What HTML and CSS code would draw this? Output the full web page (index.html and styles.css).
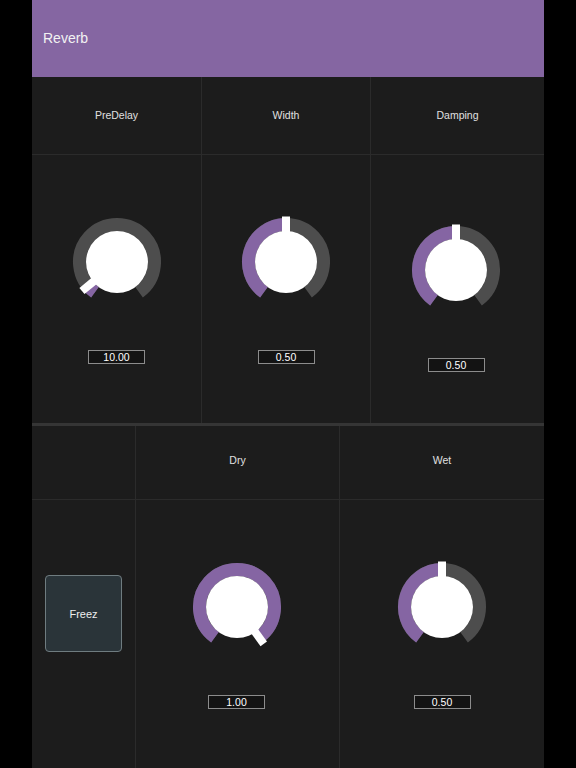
FILE: index.html
```html
<!DOCTYPE html>
<html lang="en">
<head>
    <meta charset="UTF-8">
    <meta name="viewport" content="width=device-width, initial-scale=1.0">
    <title>Reverb</title>
    <link rel="stylesheet" href="styles.css">
</head>
<body>
    <div class="app">
        <header class="title-bar">Reverb</header>

        <!-- Top row: PreDelay / Width / Damping -->
        <section class="panel panel-top">
            <div class="column">
                <div class="column-label">PreDelay</div>
                <div class="column-body">
                    <svg class="knob" width="88" height="88" viewBox="0 0 88 88">
                        <path class="knob-track" d="M 21.96 74.34 A 37.5 37.5 0 1 1 66.04 74.34"/>
                        <path class="knob-fill" d="M 21.96 74.34 A 37.5 37.5 0 0 1 15.10 67.90"/>
                        <rect class="knob-pointer" x="40" y="-1.5" width="8" height="16" transform="rotate(-129.6 44 44)"/>
                        <circle class="knob-cap" cx="44" cy="44" r="31"/>
                    </svg>
                    <div class="value-box">10.00</div>
                </div>
            </div>
            <div class="column">
                <div class="column-label">Width</div>
                <div class="column-body">
                    <svg class="knob" width="88" height="88" viewBox="0 0 88 88">
                        <path class="knob-track" d="M 21.96 74.34 A 37.5 37.5 0 1 1 66.04 74.34"/>
                        <path class="knob-fill" d="M 21.96 74.34 A 37.5 37.5 0 0 1 44 6.5"/>
                        <rect class="knob-pointer" x="40" y="-1.5" width="8" height="16"/>
                        <circle class="knob-cap" cx="44" cy="44" r="31"/>
                    </svg>
                    <div class="value-box">0.50</div>
                </div>
            </div>
            <div class="column">
                <div class="column-label">Damping</div>
                <div class="column-body column-body-low">
                    <svg class="knob" width="88" height="88" viewBox="0 0 88 88">
                        <path class="knob-track" d="M 21.96 74.34 A 37.5 37.5 0 1 1 66.04 74.34"/>
                        <path class="knob-fill" d="M 21.96 74.34 A 37.5 37.5 0 0 1 44 6.5"/>
                        <rect class="knob-pointer" x="40" y="-1.5" width="8" height="16"/>
                        <circle class="knob-cap" cx="44" cy="44" r="31"/>
                    </svg>
                    <div class="value-box">0.50</div>
                </div>
            </div>
        </section>

        <div class="divider"></div>

        <!-- Bottom row: Freeze / Dry / Wet -->
        <section class="panel panel-bottom">
            <div class="column">
                <div class="column-label"></div>
                <div class="column-body column-body-button">
                    <button class="freeze-button">Freez</button>
                </div>
            </div>
            <div class="column">
                <div class="column-label">Dry</div>
                <div class="column-body column-body-shift">
                    <svg class="knob" width="88" height="88" viewBox="0 0 88 88">
                        <path class="knob-track" d="M 21.96 74.34 A 37.5 37.5 0 1 1 66.04 74.34"/>
                        <path class="knob-fill" d="M 21.96 74.34 A 37.5 37.5 0 1 1 66.04 74.34"/>
                        <rect class="knob-pointer" x="40" y="-1.5" width="8" height="16" transform="rotate(144 44 44)"/>
                        <circle class="knob-cap" cx="44" cy="44" r="31"/>
                    </svg>
                    <div class="value-box">1.00</div>
                </div>
            </div>
            <div class="column">
                <div class="column-label">Wet</div>
                <div class="column-body">
                    <svg class="knob" width="88" height="88" viewBox="0 0 88 88">
                        <path class="knob-track" d="M 21.96 74.34 A 37.5 37.5 0 1 1 66.04 74.34"/>
                        <path class="knob-fill" d="M 21.96 74.34 A 37.5 37.5 0 0 1 44 6.5"/>
                        <rect class="knob-pointer" x="40" y="-1.5" width="8" height="16"/>
                        <circle class="knob-cap" cx="44" cy="44" r="31"/>
                    </svg>
                    <div class="value-box">0.50</div>
                </div>
            </div>
        </section>
    </div>
</body>
</html>
```

FILE: styles.css
```css
/* Basic styling */
* {
    margin: 0;
    padding: 0;
    box-sizing: border-box;
    font-family: 'Liberation Sans', Arial, sans-serif;
}

body {
    background-color: #000;
    color: #ddd;
}

.app {
    width: 512px;
    height: 768px;
    margin: 0 auto;
    background-color: #1c1c1c;
}

/* Title bar */
.title-bar {
    height: 77px;
    display: flex;
    align-items: center;
    padding-left: 11px;
    padding-bottom: 2px;
    background-color: #8566a2;
    color: #f2f2f2;
    font-size: 14px;
}

/* Panels */
.panel {
    display: grid;
}

.panel-top {
    grid-template-columns: 169px 169px 174px;
}

.panel-bottom {
    grid-template-columns: 103px 204px 205px;
}

.column + .column {
    border-left: 1px solid #2b2b2b;
}

.column-label {
    display: flex;
    align-items: center;
    justify-content: center;
    border-bottom: 1px solid #2b2b2b;
    font-size: 10.5px;
    color: #e0e0e0;
}

.panel-top .column-label {
    height: 78px;
    padding-bottom: 2px;
}

.panel-bottom .column-label {
    height: 74px;
    padding-bottom: 6px;
}

.column-body {
    height: 268px;
    display: flex;
    flex-direction: column;
    align-items: center;
    padding-top: 63px;
}

.column-body-low {
    padding-top: 71px;
    padding-right: 3px;
}

.column-body-shift {
    padding-right: 2px;
}

.column-body-button {
    padding-top: 75px;
}

.divider {
    height: 3px;
    background-color: #353535;
}

/* Knobs */
.knob {
    display: block;
    overflow: visible;
}

.knob-track,
.knob-fill {
    fill: none;
    stroke-width: 13;
}

.knob-track {
    stroke: #4d4d4d;
}

.knob-fill {
    stroke: #8565a3;
}

.knob-pointer,
.knob-cap {
    fill: #fff;
}

.value-box {
    width: 57px;
    height: 14px;
    margin-top: 44px;
    border: 1px solid #8c8c8c;
    background-color: #131313;
    color: #fff;
    font-size: 10.5px;
    line-height: 12px;
    text-align: center;
}

/* Freeze button */
.freeze-button {
    width: 77px;
    height: 77px;
    border: 1px solid #6f7c80;
    border-radius: 4px;
    background-color: #2a3439;
    color: #eee;
    font-size: 11px;
}
```
